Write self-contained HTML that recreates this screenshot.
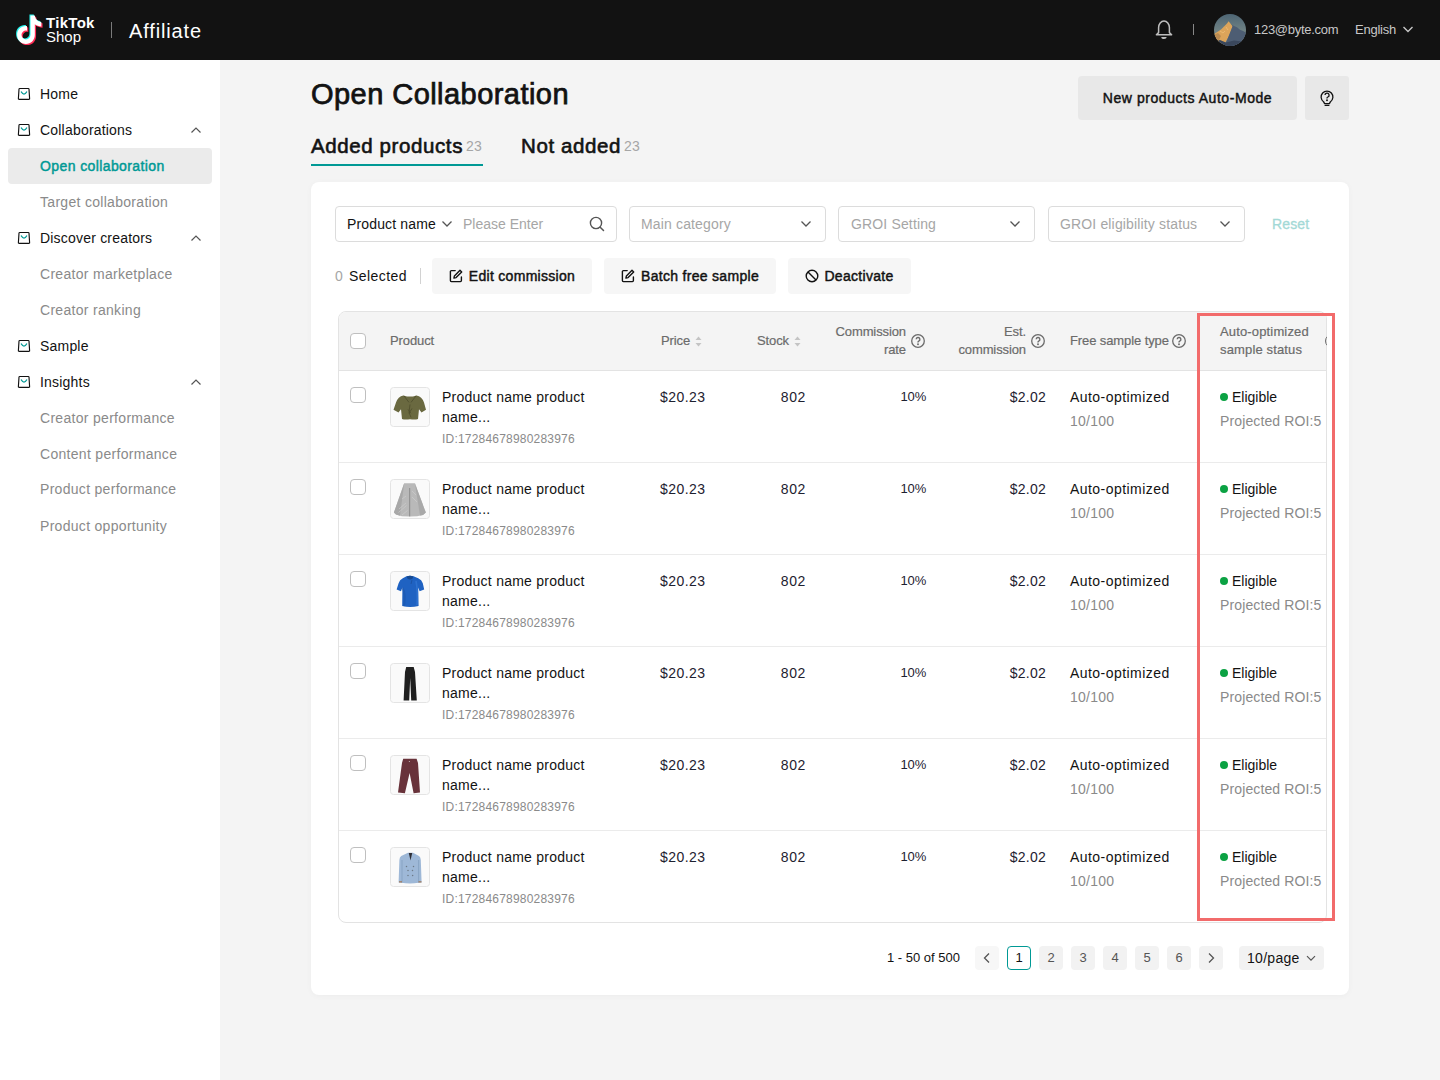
<!DOCTYPE html>
<html><head><meta charset="utf-8">
<style>
*{box-sizing:border-box;margin:0;padding:0}
html,body{width:1440px;height:1080px;overflow:hidden;background:#f4f4f4;font-family:"Liberation Sans",sans-serif;color:#121212}
.abs{position:absolute}
#hdr{position:absolute;left:0;top:0;width:1440px;height:60px;background:#121212}
#side{position:absolute;left:0;top:60px;width:220px;height:1020px;background:#fff}
.mi{position:absolute;left:0;width:220px;height:36px;font-size:14px;line-height:36px}
.mi .t{position:absolute;left:40px;top:0}
.mi.p .t{color:#121212;letter-spacing:0.2px}
.mi.s .t{color:#8a8a8a;letter-spacing:0.3px}
.mi.act{left:8px;width:204px;background:#ebebeb;border-radius:4px}
.mi.act .t{left:32px;color:#009995;letter-spacing:0.4px;-webkit-text-stroke:0.45px #009995}
.ico{position:absolute;left:18px;top:12px;width:12px;height:12px;overflow:visible}
.chev{position:absolute;left:190px;top:14px;width:12px;height:8px}
.btn2{background:#e8e8e8;border-radius:4px;color:#121212}
.tab{font-size:20.5px;line-height:28px;color:#121212;white-space:nowrap}
.tab b{font-weight:normal;letter-spacing:0.6px;-webkit-text-stroke:0.6px #121212}
.tab .cnt{font-size:14px;color:#a6a6a6;margin-left:3px;font-weight:normal;position:relative;top:-2px;letter-spacing:0.3px}
.inp{height:36px;border:1px solid #dcdcdc;border-radius:4px;background:#fff}
.ftxt{font-size:14px;line-height:36px;white-space:nowrap;letter-spacing:0.15px}
.abtn{height:36px;line-height:36px;background:#f6f6f6;border-radius:4px;text-align:center;font-size:14px;color:#121212;-webkit-text-stroke:0.45px #121212;letter-spacing:0.3px;white-space:nowrap}
.cb{width:16px;height:16px;border:1px solid #bfbfbf;border-radius:4px;background:#fff}
.th{font-size:13px;line-height:18px;color:#6b6b6b;-webkit-text-stroke:0.2px #6b6b6b;letter-spacing:-0.1px;white-space:nowrap}
.td{font-size:14px;line-height:20px;color:#121212;white-space:nowrap;letter-spacing:0.25px}
.num{color:#1e2130}
.tid{font-size:12px;line-height:18px;color:#8a8a8a;white-space:nowrap;letter-spacing:0.2px}
.pimg{width:40px;height:40px;border:1px solid #e6e6e6;border-radius:3px;background:#fbfbf9;overflow:hidden}
.pg{width:24px;height:24px;border-radius:4px;background:#f2f2f2;text-align:center;font-size:13px;line-height:24px;color:#121212}
.pg svg{display:block}
</style></head>
<body>
<div id="hdr">
  <svg class="abs" style="left:16px;top:13px" width="29" height="35" viewBox="0 0 28 34">
    <g transform="translate(1.2,1.2)"><path d="M14 2.5h4.2c.4 3.6 2.6 6 6.3 6.3v4.3c-2.4 0-4.5-.8-6.3-2.1v10.3c0 5-3.9 8.7-8.7 8.7S1 26.2 1 21.3c0-5.1 4.3-9.1 9.6-8.5v4.4c-2.6-.6-5.3 1.5-5.3 4.2 0 2.4 1.9 4.3 4.3 4.3 2.5 0 4.4-2 4.4-4.5z" fill="#fe2c55"/></g>
    <g transform="translate(-1,-1)"><path d="M14 2.5h4.2c.4 3.6 2.6 6 6.3 6.3v4.3c-2.4 0-4.5-.8-6.3-2.1v10.3c0 5-3.9 8.7-8.7 8.7S1 26.2 1 21.3c0-5.1 4.3-9.1 9.6-8.5v4.4c-2.6-.6-5.3 1.5-5.3 4.2 0 2.4 1.9 4.3 4.3 4.3 2.5 0 4.4-2 4.4-4.5z" fill="#25f4ee"/></g>
    <path d="M14 2.5h4.2c.4 3.6 2.6 6 6.3 6.3v4.3c-2.4 0-4.5-.8-6.3-2.1v10.3c0 5-3.9 8.7-8.7 8.7S1 26.2 1 21.3c0-5.1 4.3-9.1 9.6-8.5v4.4c-2.6-.6-5.3 1.5-5.3 4.2 0 2.4 1.9 4.3 4.3 4.3 2.5 0 4.4-2 4.4-4.5z" fill="#fff"/>
  </svg>
  <div class="abs" style="left:46px;top:15px;font-size:15px;font-weight:bold;color:#fff;letter-spacing:0.3px;line-height:15px">TikTok</div>
  <div class="abs" style="left:46px;top:29px;font-size:15px;color:#fff;letter-spacing:0px;line-height:16px">Shop</div>
  <div class="abs" style="left:111px;top:22px;width:1px;height:16px;background:#7a7a7a"></div>
  <div class="abs" style="left:129px;top:19px;font-size:20px;color:#fff;line-height:24px;letter-spacing:0.85px">Affiliate</div>
  <svg class="abs" style="left:1154px;top:19px" width="20" height="22" viewBox="0 0 20 22"><path d="M4.6 13.6V8.6A5.4 6.6 0 0 1 15.4 8.6V13.6L17.6 15.8H2.4Z" fill="none" stroke="#bdbdbd" stroke-width="1.5" stroke-linejoin="round"/><path d="M7.3 17.9A2.7 2.1 0 0 0 12.7 17.9Z" fill="#bdbdbd"/></svg>
  <div class="abs" style="left:1193px;top:24px;width:1px;height:11px;background:#888"></div>
  <svg class="abs" style="left:1214px;top:14px" width="32" height="32" viewBox="0 0 32 32">
    <defs><clipPath id="av"><circle cx="16" cy="16" r="16"/></clipPath>
    <linearGradient id="sky" x1="0" y1="0" x2="0" y2="1"><stop offset="0" stop-color="#4d6574"/><stop offset="1" stop-color="#8e9c92"/></linearGradient></defs>
    <g clip-path="url(#av)"><rect width="32" height="32" fill="url(#sky)"/>
    <path d="M0 20L4 17.5 7 15.5 10 12.5 13 9.5 14.6 7.2 16.6 9.8 18.6 12 17 17 14.5 23 11 29 0 30Z" fill="#dba45a"/>
    <path d="M14.6 7.2L16.8 10 20 12 23 13.2 26 15.8 29 17 32 18.5V32H10L13 26 15.5 20 17.5 15 18.6 12 16.8 10Z" fill="#4d5d73"/>
    <path d="M0 21L4 19 7 22 5 26 0 27Z" fill="#b98a52"/>
    <path d="M0 28L6 26 12 28.5 20 26.5 32 28V32H0Z" fill="#3a475c"/>
    <path d="M6 17l3 2 2-2M12 13l2 3" fill="none" stroke="#f0c27a" stroke-width=".7"/></g>
  </svg>
  <div class="abs" style="left:1254px;top:22px;font-size:13px;color:#c8c8c8;line-height:16px;letter-spacing:-0.28px">123@byte.com</div>
  <div class="abs" style="left:1355px;top:22px;font-size:13px;color:#c8c8c8;line-height:16px;letter-spacing:-0.25px">English</div>
  <svg class="abs" style="left:1402px;top:25px" width="12" height="9" viewBox="0 0 12 9"><path d="M1.5 2l4.5 4.5L10.5 2" fill="none" stroke="#c6c6c6" stroke-width="1.4"/></svg>
</div>
<div id="side">
  <div class="mi p" style="top:16px"><svg class="ico" viewBox="0 0 12 12"><path d="M1.7 .5H10.3Q10.9 .5 11 1.1L11.6 10.5Q11.7 11.4 10.8 11.4H1.2Q.3 11.4 .4 10.5L1 1.1Q1.1 .5 1.7 .5Z" fill="none" stroke="#121212" stroke-width="1.15"/><path d="M3.3 3.9Q4.6 6.1 6 6.1 7.4 6.1 8.7 3.9" fill="none" stroke="#009995" stroke-width="1.2" stroke-linecap="round"/></svg><span class="t">Home</span></div>
  <div class="mi p" style="top:52px"><svg class="ico" viewBox="0 0 12 12"><path d="M1.7 .5H10.3Q10.9 .5 11 1.1L11.6 10.5Q11.7 11.4 10.8 11.4H1.2Q.3 11.4 .4 10.5L1 1.1Q1.1 .5 1.7 .5Z" fill="none" stroke="#121212" stroke-width="1.15"/><path d="M3.3 3.9Q4.6 6.1 6 6.1 7.4 6.1 8.7 3.9" fill="none" stroke="#009995" stroke-width="1.2" stroke-linecap="round"/></svg><span class="t">Collaborations</span><svg class="chev" viewBox="0 0 12 8"><path d="M1.5 6.5L6 2l4.5 4.5" fill="none" stroke="#555" stroke-width="1.2"/></svg></div>
  <div class="mi act" style="top:88px"><span class="t">Open collaboration</span></div>
  <div class="mi s" style="top:124px"><span class="t">Target collaboration</span></div>
  <div class="mi p" style="top:160px"><svg class="ico" viewBox="0 0 12 12"><path d="M1.7 .5H10.3Q10.9 .5 11 1.1L11.6 10.5Q11.7 11.4 10.8 11.4H1.2Q.3 11.4 .4 10.5L1 1.1Q1.1 .5 1.7 .5Z" fill="none" stroke="#121212" stroke-width="1.15"/><path d="M3.3 3.9Q4.6 6.1 6 6.1 7.4 6.1 8.7 3.9" fill="none" stroke="#009995" stroke-width="1.2" stroke-linecap="round"/></svg><span class="t">Discover creators</span><svg class="chev" viewBox="0 0 12 8"><path d="M1.5 6.5L6 2l4.5 4.5" fill="none" stroke="#555" stroke-width="1.2"/></svg></div>
  <div class="mi s" style="top:196px"><span class="t">Creator marketplace</span></div>
  <div class="mi s" style="top:232px"><span class="t">Creator ranking</span></div>
  <div class="mi p" style="top:268px"><svg class="ico" viewBox="0 0 12 12"><path d="M1.7 .5H10.3Q10.9 .5 11 1.1L11.6 10.5Q11.7 11.4 10.8 11.4H1.2Q.3 11.4 .4 10.5L1 1.1Q1.1 .5 1.7 .5Z" fill="none" stroke="#121212" stroke-width="1.15"/><path d="M3.3 3.9Q4.6 6.1 6 6.1 7.4 6.1 8.7 3.9" fill="none" stroke="#009995" stroke-width="1.2" stroke-linecap="round"/></svg><span class="t">Sample</span></div>
  <div class="mi p" style="top:304px"><svg class="ico" viewBox="0 0 12 12"><path d="M1.7 .5H10.3Q10.9 .5 11 1.1L11.6 10.5Q11.7 11.4 10.8 11.4H1.2Q.3 11.4 .4 10.5L1 1.1Q1.1 .5 1.7 .5Z" fill="none" stroke="#121212" stroke-width="1.15"/><path d="M3.3 3.9Q4.6 6.1 6 6.1 7.4 6.1 8.7 3.9" fill="none" stroke="#009995" stroke-width="1.2" stroke-linecap="round"/></svg><span class="t">Insights</span><svg class="chev" viewBox="0 0 12 8"><path d="M1.5 6.5L6 2l4.5 4.5" fill="none" stroke="#555" stroke-width="1.2"/></svg></div>
  <div class="mi s" style="top:340px"><span class="t">Creator performance</span></div>
  <div class="mi s" style="top:376px"><span class="t">Content performance</span></div>
  <div class="mi s" style="top:411px"><span class="t">Product performance</span></div>
  <div class="mi s" style="top:448px"><span class="t">Product opportunity</span></div>
</div>
<!-- MAIN -->
<div id="main">
  <div class="abs" style="left:311px;top:76px;font-size:29px;line-height:36px;color:#121212;letter-spacing:0.45px;-webkit-text-stroke:0.75px #121212">Open Collaboration</div>
  <div class="abs btn2" style="left:1078px;top:76px;width:219px;height:44px;line-height:44px;text-align:center;font-size:14px;letter-spacing:0.55px;-webkit-text-stroke:0.45px #121212">New products Auto-Mode</div>
  <div class="abs btn2" style="left:1305px;top:76px;width:44px;height:44px;border-radius:3px">
    <svg class="abs" style="left:14px;top:12px" width="16" height="20" viewBox="0 0 16 20"><path d="M4.5 13.7A5.9 5.9 0 1 1 11.5 13.7L10.4 15.6H5.6Z" fill="none" stroke="#121212" stroke-width="1.3" stroke-linejoin="round"/><path d="M6 7.1a2.05 2.05 0 1 1 2.9 1.9c-.6.3-.9.6-.9 1.1v.3" fill="none" stroke="#121212" stroke-width="1.35"/><circle cx="8" cy="12.2" r=".95" fill="#121212"/><path d="M6.2 17.4h3.6" stroke="#121212" stroke-width="1.4" stroke-linecap="round"/></svg>
  </div>
  <div class="abs tab" style="left:311px;top:132px"><b>Added products</b><span class="cnt">23</span></div>
  <div class="abs" style="left:311px;top:164px;width:172px;height:2px;background:#009995"></div>
  <div class="abs tab" style="left:521px;top:132px"><b>Not added</b><span class="cnt">23</span></div>
  <div id="card" class="abs" style="left:311px;top:182px;width:1038px;height:813px;background:#fff;border-radius:8px;box-shadow:0 1px 6px rgba(0,0,0,0.035)"></div>
  
  <!-- filters -->
  <div class="abs inp" style="left:335px;top:206px;width:282px"></div>
  <div class="abs ftxt" style="left:347px;top:206px;color:#121212">Product name</div>
  <svg class="abs" style="left:441px;top:220px" width="12" height="8" viewBox="0 0 12 8"><path d="M1.5 1.5L6 6l4.5-4.5" fill="none" stroke="#555" stroke-width="1.3"/></svg>
  <div class="abs ftxt" style="left:463px;top:206px;color:#a6a6a6;letter-spacing:0px">Please Enter</div>
  <svg class="abs" style="left:589px;top:216px" width="16" height="16" viewBox="0 0 16 16"><circle cx="7" cy="7" r="5.6" fill="none" stroke="#555" stroke-width="1.4"/><path d="M11.2 11.2l3.3 3.3" stroke="#555" stroke-width="1.5" stroke-linecap="round"/></svg>
  <div class="abs inp" style="left:629px;top:206px;width:197px"></div>
  <div class="abs ftxt" style="left:641px;top:206px;color:#a6a6a6">Main category</div>
  <svg class="abs" style="left:800px;top:220px" width="12" height="8" viewBox="0 0 12 8"><path d="M1.5 1.5L6 6l4.5-4.5" fill="none" stroke="#555" stroke-width="1.3"/></svg>
  <div class="abs inp" style="left:838px;top:206px;width:197px"></div>
  <div class="abs ftxt" style="left:851px;top:206px;color:#a6a6a6">GROI Setting</div>
  <svg class="abs" style="left:1009px;top:220px" width="12" height="8" viewBox="0 0 12 8"><path d="M1.5 1.5L6 6l4.5-4.5" fill="none" stroke="#555" stroke-width="1.3"/></svg>
  <div class="abs inp" style="left:1048px;top:206px;width:197px"></div>
  <div class="abs ftxt" style="left:1060px;top:206px;color:#a6a6a6">GROI eligibility status</div>
  <svg class="abs" style="left:1219px;top:220px" width="12" height="8" viewBox="0 0 12 8"><path d="M1.5 1.5L6 6l4.5-4.5" fill="none" stroke="#555" stroke-width="1.3"/></svg>
  <div class="abs ftxt" style="left:1272px;top:206px;color:#a3d9d6;-webkit-text-stroke:0.3px #a3d9d6">Reset</div>
  <!-- actions -->
  <div class="abs ftxt" style="left:335px;top:258px;color:#a6a6a6">0</div>
  <div class="abs ftxt" style="left:349px;top:258px;color:#121212;letter-spacing:0.45px">Selected</div>
  <div class="abs" style="left:420px;top:268px;width:1px;height:16px;background:#d2d2d2"></div>
  <div class="abs abtn" style="left:432px;top:258px;width:160px"><svg width="14" height="14" viewBox="0 0 14 14" style="vertical-align:-2px;margin-right:6px"><path d="M6.2 1.6H2.4a1 1 0 0 0-1 1v9a1 1 0 0 0 1 1h9a1 1 0 0 0 1-1V8" fill="none" stroke="#121212" stroke-width="1.4" stroke-linecap="round"/><path d="M11 1.3l1.7 1.7-5.6 5.6-2.2.5.5-2.2z" fill="none" stroke="#121212" stroke-width="1.4" stroke-linejoin="round"/></svg>Edit commission</div>
  <div class="abs abtn" style="left:604px;top:258px;width:172px"><svg width="14" height="14" viewBox="0 0 14 14" style="vertical-align:-2px;margin-right:6px"><path d="M6.2 1.6H2.4a1 1 0 0 0-1 1v9a1 1 0 0 0 1 1h9a1 1 0 0 0 1-1V8" fill="none" stroke="#121212" stroke-width="1.4" stroke-linecap="round"/><path d="M11 1.3l1.7 1.7-5.6 5.6-2.2.5.5-2.2z" fill="none" stroke="#121212" stroke-width="1.4" stroke-linejoin="round"/></svg>Batch free sample</div>
  <div class="abs abtn" style="left:788px;top:258px;width:123px"><svg width="14" height="14" viewBox="0 0 14 14" style="vertical-align:-2px;margin-right:5px"><circle cx="7" cy="7" r="5.8" fill="none" stroke="#121212" stroke-width="1.4"/><path d="M3 3l8 8" stroke="#121212" stroke-width="1.4"/></svg>Deactivate</div>

  <div id="tbl" class="abs" style="left:338px;top:311px;width:989px;height:612px;border:1px solid #e3e3e3;border-radius:8px;overflow:hidden">
    <div class="abs" style="left:0;top:0;width:989px;height:59px;background:#f4f4f4;border-bottom:1px solid #e3e3e3"></div>
  </div>
  <div class="abs cb" style="left:350px;top:333px"></div>
  <div class="abs th" style="left:390px;top:332px">Product</div>
  <div class="abs th" style="left:661px;top:332px">Price</div><svg class="abs" style="left:695px;top:336px" width="7" height="11" viewBox="0 0 7 11"><path d="M3.5 0.5L6.5 4H.5z" fill="#c4c4c4"/><path d="M3.5 10.5L6.5 7H.5z" fill="#c4c4c4"/></svg>
  <div class="abs th" style="left:757px;top:332px">Stock</div><svg class="abs" style="left:794px;top:336px" width="7" height="11" viewBox="0 0 7 11"><path d="M3.5 0.5L6.5 4H.5z" fill="#c4c4c4"/><path d="M3.5 10.5L6.5 7H.5z" fill="#c4c4c4"/></svg>
  <div class="abs th" style="left:806px;top:323px;width:100px;text-align:right">Commission<br>rate</div><svg class="abs" style="left:911px;top:334px" width="14" height="14" viewBox="0 0 14 14"><circle cx="7" cy="7" r="6.3" fill="none" stroke="#6b6b6b" stroke-width="1.3"/><path d="M5.2 5.3a1.85 1.85 0 1 1 2.6 1.75c-.5.25-.8.5-.8 1v.45" fill="none" stroke="#6b6b6b" stroke-width="1.4"/><circle cx="7" cy="10.2" r=".95" fill="#6b6b6b"/></svg>
  <div class="abs th" style="left:926px;top:323px;width:100px;text-align:right">Est.<br>commission</div><svg class="abs" style="left:1031px;top:334px" width="14" height="14" viewBox="0 0 14 14"><circle cx="7" cy="7" r="6.3" fill="none" stroke="#6b6b6b" stroke-width="1.3"/><path d="M5.2 5.3a1.85 1.85 0 1 1 2.6 1.75c-.5.25-.8.5-.8 1v.45" fill="none" stroke="#6b6b6b" stroke-width="1.4"/><circle cx="7" cy="10.2" r=".95" fill="#6b6b6b"/></svg>
  <div class="abs th" style="left:1070px;top:332px">Free sample type</div><svg class="abs" style="left:1172px;top:334px" width="14" height="14" viewBox="0 0 14 14"><circle cx="7" cy="7" r="6.3" fill="none" stroke="#6b6b6b" stroke-width="1.3"/><path d="M5.2 5.3a1.85 1.85 0 1 1 2.6 1.75c-.5.25-.8.5-.8 1v.45" fill="none" stroke="#6b6b6b" stroke-width="1.4"/><circle cx="7" cy="10.2" r=".95" fill="#6b6b6b"/></svg>
  <div class="abs th" style="left:1220px;top:323px;letter-spacing:0.15px">Auto-optimized<br>sample status</div>
  <div class="abs" style="left:339px;top:462px;width:987px;height:1px;background:#ebebeb"></div>
  <div class="abs cb" style="left:350px;top:387px"></div>
  <svg class="abs" style="left:390px;top:387px" width="40" height="40" viewBox="0 0 40 40"><rect x=".5" y=".5" width="39" height="39" rx="3" fill="#fafafa" stroke="#e4e4e4"/><g transform="translate(0,-1.6)"><path d="M13.4 10L17 11.2H23L26.4 10Q32 11 34 17L36 24.3 31.5 27 29 23.8 28 33.6Q25 34.6 20 33.8 15 34.6 12 33.6L11 23.8 8.5 27 3.5 24.3 6 17Q8 11 13.4 10Z" fill="#6a6940"/><path d="M14 10.5L19 17 M26 10.5L21 17M20 19L19 27 21 32M18 24l3 4M22 23l-3 5" fill="none" stroke="#4e4d2c" stroke-width=".8"/></g></svg>
  <div class="abs td" style="left:442px;top:387px;line-height:20px">Product name product<br>name...</div>
  <div class="abs tid" style="left:442px;top:430px">ID:17284678980283976</div>
  <div class="abs td num" style="left:660px;top:387px;letter-spacing:0.45px">$20.23</div>
  <div class="abs td num" style="left:706px;top:387px;width:100px;text-align:right;letter-spacing:0.6px;padding-right:0">802</div>
  <div class="abs td num" style="left:826px;top:387px;width:100px;text-align:right;font-size:13px;letter-spacing:-0.2px">10%</div>
  <div class="abs td num" style="left:946px;top:387px;width:100px;text-align:right">$2.02</div>
  <div class="abs td" style="left:1070px;top:387px;letter-spacing:0.45px">Auto-optimized</div>
  <div class="abs td" style="left:1070px;top:411px;color:#8a8a8a">10/100</div>
  <div class="abs" style="left:1220px;top:393px;width:8px;height:8px;border-radius:50%;background:#0ba243"></div>
  <div class="abs td" style="left:1232px;top:387px;letter-spacing:0px">Eligible</div>
  <div class="abs td" style="left:1220px;top:411px;color:#8a8a8a;width:106px;overflow:hidden;white-space:nowrap;letter-spacing:0.12px">Projected ROI:5</div>
  <div class="abs" style="left:339px;top:554px;width:987px;height:1px;background:#ebebeb"></div>
  <div class="abs cb" style="left:350px;top:479px"></div>
  <svg class="abs" style="left:390px;top:479px" width="40" height="40" viewBox="0 0 40 40"><rect x=".5" y=".5" width="39" height="39" rx="3" fill="#fafafa" stroke="#e4e4e4"/><path d="M14.2 4.3H24.9L35.8 33.6 33 36 27 37.2 20 37.6 12 37.2 6 35.6 3.9 33.6Z" fill="#b9b9b9"/><path d="M19.7 9V37.4" stroke="#8a8a8a" stroke-width="1"/><path d="M14.2 4.3L3.9 33.6 6 35.6 10 36.8Z" fill="#a8a8a8"/><path d="M24.9 4.3L35.8 33.6 33 36 30 36.5Z" fill="#a9a9a9"/><path d="M9 30l7-6M8.5 33.5l8-7M12 36l5.5-4.5M12 20l4-3M22 12l4 4M22 18l5 5" stroke="#cdcdcd" stroke-width=".7"/></svg>
  <div class="abs td" style="left:442px;top:479px;line-height:20px">Product name product<br>name...</div>
  <div class="abs tid" style="left:442px;top:522px">ID:17284678980283976</div>
  <div class="abs td num" style="left:660px;top:479px;letter-spacing:0.45px">$20.23</div>
  <div class="abs td num" style="left:706px;top:479px;width:100px;text-align:right;letter-spacing:0.6px;padding-right:0">802</div>
  <div class="abs td num" style="left:826px;top:479px;width:100px;text-align:right;font-size:13px;letter-spacing:-0.2px">10%</div>
  <div class="abs td num" style="left:946px;top:479px;width:100px;text-align:right">$2.02</div>
  <div class="abs td" style="left:1070px;top:479px;letter-spacing:0.45px">Auto-optimized</div>
  <div class="abs td" style="left:1070px;top:503px;color:#8a8a8a">10/100</div>
  <div class="abs" style="left:1220px;top:485px;width:8px;height:8px;border-radius:50%;background:#0ba243"></div>
  <div class="abs td" style="left:1232px;top:479px;letter-spacing:0px">Eligible</div>
  <div class="abs td" style="left:1220px;top:503px;color:#8a8a8a;width:106px;overflow:hidden;white-space:nowrap;letter-spacing:0.12px">Projected ROI:5</div>
  <div class="abs" style="left:339px;top:646px;width:987px;height:1px;background:#ebebeb"></div>
  <div class="abs cb" style="left:350px;top:571px"></div>
  <svg class="abs" style="left:390px;top:571px" width="40" height="40" viewBox="0 0 40 40"><rect x=".5" y=".5" width="39" height="39" rx="3" fill="#fafafa" stroke="#e4e4e4"/><path d="M16.5 5.3Q20 4.3 23.5 5.3L28.2 7.2Q31.8 8.6 32.8 12.2L34.2 18.6 29.6 20.2 28.2 16.6 28.6 35Q20 37.2 12.2 35L12.4 16.6 11 20.2 6.6 18.6 8.6 12.2Q9.6 8.6 12.8 7.2Z" fill="#1f62c2"/><path d="M16.6 5.4Q20 4.2 23.4 5.4L22.6 7.6Q20 9.6 17.4 7.6Z" fill="#174a92"/><path d="M22 9l-1 4" stroke="#17488e" stroke-width=".6"/><path d="M12.4 17Q16 22 14 35" fill="none" stroke="#1a54a8" stroke-width="2" opacity=".5"/><path d="M26 10Q28 20 27 34" fill="none" stroke="#3a80de" stroke-width="1.6" opacity=".5"/></svg>
  <div class="abs td" style="left:442px;top:571px;line-height:20px">Product name product<br>name...</div>
  <div class="abs tid" style="left:442px;top:614px">ID:17284678980283976</div>
  <div class="abs td num" style="left:660px;top:571px;letter-spacing:0.45px">$20.23</div>
  <div class="abs td num" style="left:706px;top:571px;width:100px;text-align:right;letter-spacing:0.6px;padding-right:0">802</div>
  <div class="abs td num" style="left:826px;top:571px;width:100px;text-align:right;font-size:13px;letter-spacing:-0.2px">10%</div>
  <div class="abs td num" style="left:946px;top:571px;width:100px;text-align:right">$2.02</div>
  <div class="abs td" style="left:1070px;top:571px;letter-spacing:0.45px">Auto-optimized</div>
  <div class="abs td" style="left:1070px;top:595px;color:#8a8a8a">10/100</div>
  <div class="abs" style="left:1220px;top:577px;width:8px;height:8px;border-radius:50%;background:#0ba243"></div>
  <div class="abs td" style="left:1232px;top:571px;letter-spacing:0px">Eligible</div>
  <div class="abs td" style="left:1220px;top:595px;color:#8a8a8a;width:106px;overflow:hidden;white-space:nowrap;letter-spacing:0.12px">Projected ROI:5</div>
  <div class="abs" style="left:339px;top:738px;width:987px;height:1px;background:#ebebeb"></div>
  <div class="abs cb" style="left:350px;top:663px"></div>
  <svg class="abs" style="left:390px;top:663px" width="40" height="40" viewBox="0 0 40 40"><rect x=".5" y=".5" width="39" height="39" rx="3" fill="#fafafa" stroke="#e4e4e4"/><path d="M16.2 4.1H23.7L25 9 26.8 37.6H21.2L20.2 15 19.2 37.6H13.6L15 9Z" fill="#1f1f1f"/></svg>
  <div class="abs td" style="left:442px;top:663px;line-height:20px">Product name product<br>name...</div>
  <div class="abs tid" style="left:442px;top:706px">ID:17284678980283976</div>
  <div class="abs td num" style="left:660px;top:663px;letter-spacing:0.45px">$20.23</div>
  <div class="abs td num" style="left:706px;top:663px;width:100px;text-align:right;letter-spacing:0.6px;padding-right:0">802</div>
  <div class="abs td num" style="left:826px;top:663px;width:100px;text-align:right;font-size:13px;letter-spacing:-0.2px">10%</div>
  <div class="abs td num" style="left:946px;top:663px;width:100px;text-align:right">$2.02</div>
  <div class="abs td" style="left:1070px;top:663px;letter-spacing:0.45px">Auto-optimized</div>
  <div class="abs td" style="left:1070px;top:687px;color:#8a8a8a">10/100</div>
  <div class="abs" style="left:1220px;top:669px;width:8px;height:8px;border-radius:50%;background:#0ba243"></div>
  <div class="abs td" style="left:1232px;top:663px;letter-spacing:0px">Eligible</div>
  <div class="abs td" style="left:1220px;top:687px;color:#8a8a8a;width:106px;overflow:hidden;white-space:nowrap;letter-spacing:0.12px">Projected ROI:5</div>
  <div class="abs" style="left:339px;top:830px;width:987px;height:1px;background:#ebebeb"></div>
  <div class="abs cb" style="left:350px;top:755px"></div>
  <svg class="abs" style="left:390px;top:755px" width="40" height="40" viewBox="0 0 40 40"><rect x=".5" y=".5" width="39" height="39" rx="3" fill="#fafafa" stroke="#e4e4e4"/><path d="M13.2 3.7H26.6L28 8 30 37.4 23.6 38.3 19.6 18 14.9 38.3 8 37.4 12 8Z" fill="#68323a"/><circle cx="19.4" cy="6.5" r=".6" fill="#c9b9b9"/></svg>
  <div class="abs td" style="left:442px;top:755px;line-height:20px">Product name product<br>name...</div>
  <div class="abs tid" style="left:442px;top:798px">ID:17284678980283976</div>
  <div class="abs td num" style="left:660px;top:755px;letter-spacing:0.45px">$20.23</div>
  <div class="abs td num" style="left:706px;top:755px;width:100px;text-align:right;letter-spacing:0.6px;padding-right:0">802</div>
  <div class="abs td num" style="left:826px;top:755px;width:100px;text-align:right;font-size:13px;letter-spacing:-0.2px">10%</div>
  <div class="abs td num" style="left:946px;top:755px;width:100px;text-align:right">$2.02</div>
  <div class="abs td" style="left:1070px;top:755px;letter-spacing:0.45px">Auto-optimized</div>
  <div class="abs td" style="left:1070px;top:779px;color:#8a8a8a">10/100</div>
  <div class="abs" style="left:1220px;top:761px;width:8px;height:8px;border-radius:50%;background:#0ba243"></div>
  <div class="abs td" style="left:1232px;top:755px;letter-spacing:0px">Eligible</div>
  <div class="abs td" style="left:1220px;top:779px;color:#8a8a8a;width:106px;overflow:hidden;white-space:nowrap;letter-spacing:0.12px">Projected ROI:5</div>
  <div class="abs cb" style="left:350px;top:847px"></div>
  <svg class="abs" style="left:390px;top:847px" width="40" height="40" viewBox="0 0 40 40"><rect x=".5" y=".5" width="39" height="39" rx="3" fill="#fafafa" stroke="#e4e4e4"/><path d="M18 5.8H23L29 9Q30.6 10 30.8 13L31.6 35.5 28.6 35.8Q20 37.2 11.4 35.8L8.6 35.5 9.4 13Q9.6 10 11.2 9Z" fill="#9eb8d7"/><path d="M18.8 6H22.2L20.5 13.5Z" fill="#2f2f35"/><path d="M12 13L12 35.5M28.6 13V35.5" stroke="#86a1c2" stroke-width=".9"/><g fill="#6e7a88"><circle cx="16.5" cy="19.6" r=".75"/><circle cx="23.5" cy="19.6" r=".75"/><circle cx="18" cy="23.6" r=".75"/><circle cx="22.5" cy="23.6" r=".75"/><circle cx="18" cy="28.4" r=".75"/><circle cx="22.6" cy="28.4" r=".75"/></g><path d="M9 34.8H12M28.5 34.8H31.5" stroke="#a0785a" stroke-width="1.2"/></svg>
  <div class="abs td" style="left:442px;top:847px;line-height:20px">Product name product<br>name...</div>
  <div class="abs tid" style="left:442px;top:890px">ID:17284678980283976</div>
  <div class="abs td num" style="left:660px;top:847px;letter-spacing:0.45px">$20.23</div>
  <div class="abs td num" style="left:706px;top:847px;width:100px;text-align:right;letter-spacing:0.6px;padding-right:0">802</div>
  <div class="abs td num" style="left:826px;top:847px;width:100px;text-align:right;font-size:13px;letter-spacing:-0.2px">10%</div>
  <div class="abs td num" style="left:946px;top:847px;width:100px;text-align:right">$2.02</div>
  <div class="abs td" style="left:1070px;top:847px;letter-spacing:0.45px">Auto-optimized</div>
  <div class="abs td" style="left:1070px;top:871px;color:#8a8a8a">10/100</div>
  <div class="abs" style="left:1220px;top:853px;width:8px;height:8px;border-radius:50%;background:#0ba243"></div>
  <div class="abs td" style="left:1232px;top:847px;letter-spacing:0px">Eligible</div>
  <div class="abs td" style="left:1220px;top:871px;color:#8a8a8a;width:106px;overflow:hidden;white-space:nowrap;letter-spacing:0.12px">Projected ROI:5</div>
  <div class="abs" style="left:1325px;top:334px;width:2px;height:14px;overflow:hidden"><div style="position:absolute;left:0;top:0;width:14px;height:14px;border:1.2px solid #6b6b6b;border-radius:50%"></div></div>
  <div class="abs" style="left:1197px;top:313px;width:138px;height:608px;border:3px solid #f26b6b"></div>
  <div class="abs" style="left:887px;top:946px;font-size:13px;line-height:24px;color:#121212">1 - 50 of 500</div>
  <div class="abs pg" style="left:975px;top:946px;background:#f7f7f7"><svg width="24" height="24" viewBox="0 0 24 24"><path d="M14 7.5L9.5 12l4.5 4.5" fill="none" stroke="#555" stroke-width="1.3"/></svg></div>
  <div class="abs pg" style="left:1007px;top:946px;border:1px solid #009995;background:#fff;line-height:22px">1</div>
  <div class="abs pg" style="left:1039px;top:946px;color:#555">2</div>
  <div class="abs pg" style="left:1071px;top:946px;color:#555">3</div>
  <div class="abs pg" style="left:1103px;top:946px;color:#555">4</div>
  <div class="abs pg" style="left:1135px;top:946px;color:#555">5</div>
  <div class="abs pg" style="left:1167px;top:946px;color:#555">6</div>
  <div class="abs pg" style="left:1199px;top:946px"><svg width="24" height="24" viewBox="0 0 24 24"><path d="M10 7.5L14.5 12 10 16.5" fill="none" stroke="#555" stroke-width="1.3"/></svg></div>
  <div class="abs pg" style="left:1239px;top:946px;width:85px;text-align:left;padding-left:8px;font-size:14px;letter-spacing:0.3px">10/page<svg class="abs" style="left:67px;top:9px" width="10" height="7" viewBox="0 0 10 7"><path d="M1 1.2l4 4 4-4" fill="none" stroke="#555" stroke-width="1.2"/></svg></div>

</div>
</body></html>
